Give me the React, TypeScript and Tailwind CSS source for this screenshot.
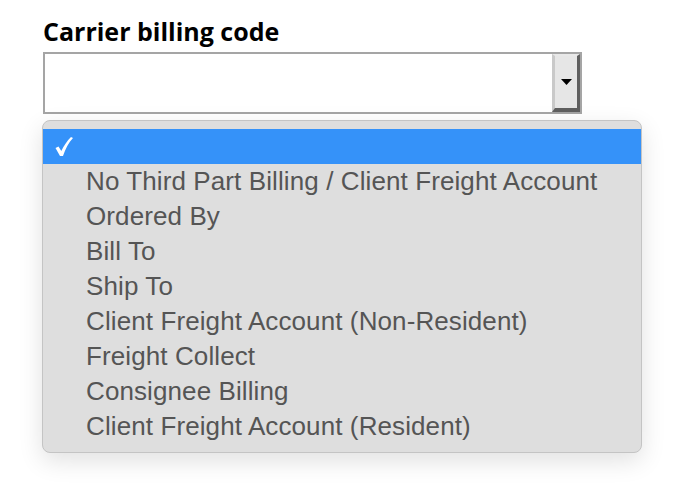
const options = [
  "No Third Part Billing / Client Freight Account",
  "Ordered By",
  "Bill To",
  "Ship To",
  "Client Freight Account (Non-Resident)",
  "Freight Collect",
  "Consignee Billing",
  "Client Freight Account (Resident)",
];

export default function App() {
  return (
    <div className="relative h-[500px] w-[700px] bg-white">
      <div className="pl-[43px] pt-[14px]">
        <label className="block font-['Open_Sans',sans-serif] text-[25px] font-bold leading-[34px] text-black">
          Carrier billing code
        </label>
        {/* select box */}
        <div className="mt-[4px] flex h-[62px] w-[539px] border-2 border-[#a5a5a5] bg-white">
          <div className="flex-1" />
          <div className="flex w-[28px] items-center justify-center border-b-[4px] border-l-[3px] border-r-[3px] border-t-[2px] border-b-[#5f5f5f] border-l-[#c9c9c9] border-r-[#5f5f5f] border-t-[#e8e8e8] bg-[#e6e6e6]">
            <svg width="11" height="6" viewBox="0 0 11 6">
              <path d="M0 0h11L5.5 6z" fill="#000" />
            </svg>
          </div>
        </div>
      </div>

      {/* open menu */}
      <div className="absolute left-[42px] top-[120px] w-[600px] rounded-[8px] border border-[#c4c4c4] bg-[#dedede] py-[8px] shadow-[0_8px_24px_rgba(0,0,0,0.12)]">
        <div className="flex h-[35px] items-center bg-[#3592f9] pl-[12px]">
          <svg width="18" height="19" viewBox="0 0 18 19">
            <path d="M0.5 11 L3.5 9.5 L6.3 14 C9 8.5 12 4 16 0 L18 1 C13.5 6 10.5 11.5 8 19 L5 19 Z" fill="#fff" />
          </svg>
        </div>
        {options.map((o) => (
          <div
            key={o}
            className="flex h-[35px] items-center pl-[43px] font-['Liberation_Sans',Arial,sans-serif] text-[26px] tracking-[0.1px] text-[#555555]"
          >
            {o}
          </div>
        ))}
      </div>
    </div>
  );
}
